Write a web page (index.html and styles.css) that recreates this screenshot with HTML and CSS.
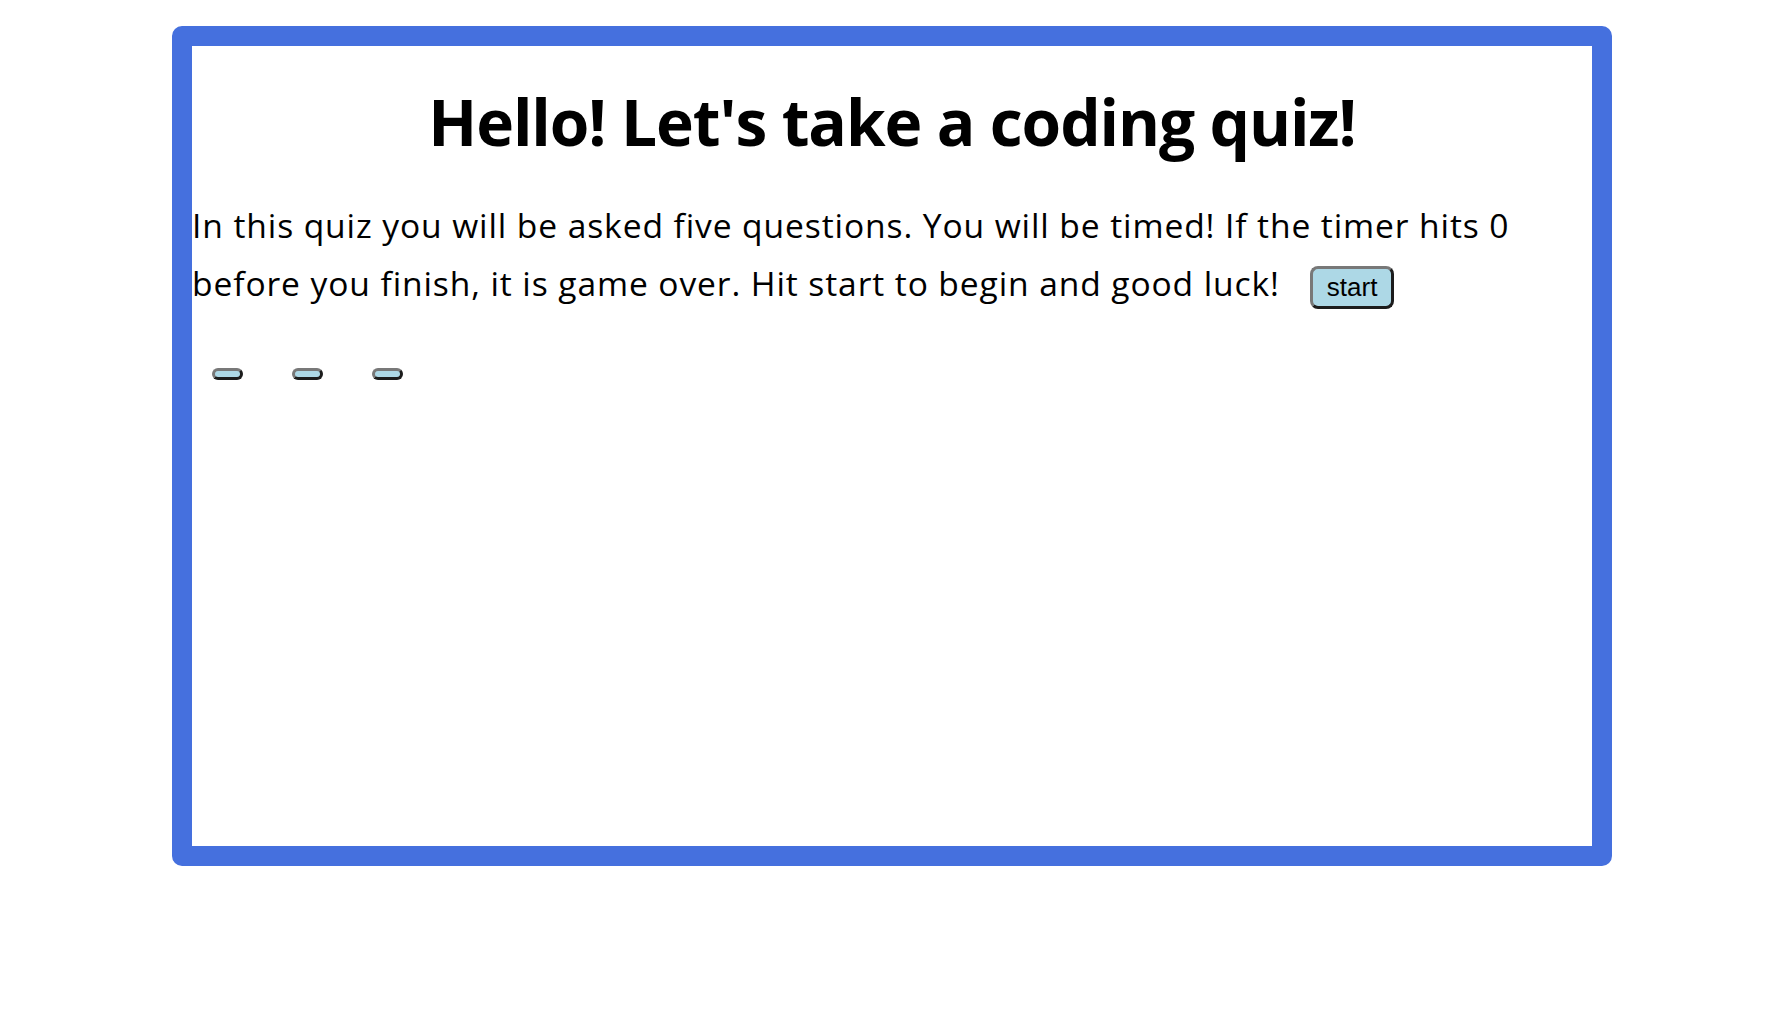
FILE: index.html
```html
<!DOCTYPE html>
<html lang="en">
<head>
<meta charset="utf-8">
<title>Coding Quiz</title>
<link rel="stylesheet" href="styles.css">
</head>
<body>
<main class="card">
  <h1 class="title">Hello! Let's take a coding quiz!</h1>
  <p class="intro">In this quiz you will be asked five questions. You will be timed! If the timer hits 0 before you finish, it is game over. Hit start to begin and good luck!<button class="btn btn-start" type="button">start</button></p>
  <div class="answers">
    <button class="btn" type="button"></button>
    <button class="btn" type="button"></button>
    <button class="btn" type="button"></button>
  </div>
</main>
</body>
</html>
```

FILE: styles.css
```css
html, body {
  margin: 0;
  padding: 0;
  background: #ffffff;
}

body {
  font-family: "Open Sans", "Noto Sans", sans-serif;
  color: #000000;
}

.card {
  box-sizing: border-box;
  width: 1440px;
  height: 840px;
  margin: 26px 0 0 172px;
  border: 20px solid #4570de;
  border-radius: 10px;
  background: #ffffff;
}

.title {
  margin: 38px 0 0;
  font-size: 64px;
  line-height: 76px;
  font-weight: 700;
  letter-spacing: -1.1px;
  text-align: center;
}

.intro {
  margin: 36px 0 0;
  font-size: 33.6px;
  line-height: 58px;
  letter-spacing: 0.9px;
  padding-right: 40px;
}

.btn {
  font-family: "Liberation Sans", Arial, sans-serif;
  font-size: 26px;
  letter-spacing: 0;
  padding: 3px 14px;
  border: 3px solid;
  border-color: #787878 #1c1c1c #1c1c1c #787878;
  border-radius: 8px;
  background: #add8e6;
  color: #000000;
  vertical-align: baseline;
}

.btn-start {
  margin-left: 30px;
}

.answers {
  display: flex;
  gap: 49px;
  padding-left: 20px;
  margin-top: 56px;
}

.answers .btn {
  width: 31px;
  height: 12px;
  padding: 0;
}
```
